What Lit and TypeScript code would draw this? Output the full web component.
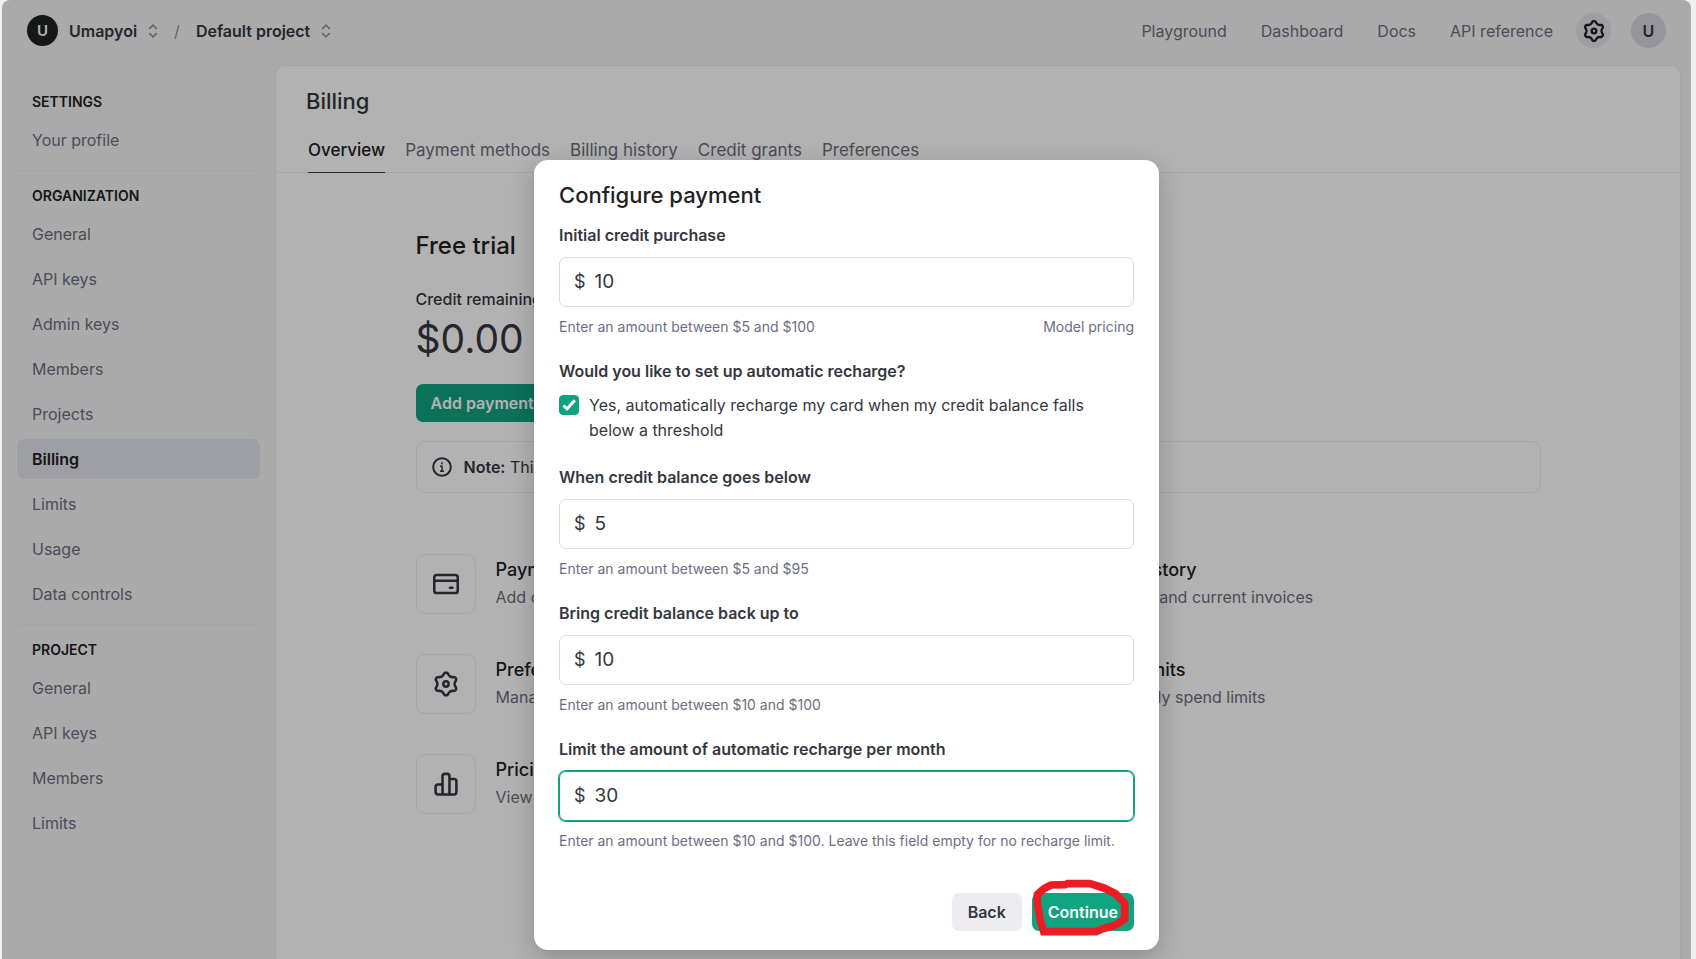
import { LitElement, html, css, svg, nothing } from "lit";
import { customElement, property } from "lit/decorators.js";
import { classMap } from "lit/directives/class-map.js";

const gearShape = svg`
  <path d="M11.568 3.5a1 1 0 0 0-.863.494l-.811 1.381A3 3 0 0 1 7.33 6.856l-1.596.013a1 1 0 0 0-.858.501l-.439.761a1 1 0 0 0-.004.992l.792 1.4a3 3 0 0 1 0 2.954l-.792 1.4a1 1 0 0 0 .004.992l.439.76a1 1 0 0 0 .858.502l1.596.013a3 3 0 0 1 2.564 1.48l.811 1.382a1 1 0 0 0 .863.494h.87a1 1 0 0 0 .862-.494l.812-1.381a3 3 0 0 1 2.563-1.481l1.596-.013a1 1 0 0 0 .859-.501l.438-.761a1 1 0 0 0 .005-.992l-.793-1.4a3 3 0 0 1 0-2.954l.793-1.4a1 1 0 0 0-.005-.992l-.439-.76a1 1 0 0 0-.858-.502l-1.597-.013a3 3 0 0 1-2.563-1.48L13.3 3.994a1 1 0 0 0-.862-.494h-.87Z"/>
  <circle cx="12" cy="12" r="2"/>`;

const gear = html`<svg viewBox="0 0 24 24" aria-hidden="true">${gearShape}</svg>`;
const card = html`<svg viewBox="0 0 24 24" aria-hidden="true">
  <rect x="3.2" y="5.2" width="17.6" height="13.6" rx="1.8"/>
  <path d="M3.4 9.6h17.2"/><path d="M15 14.8h1.8"/>
</svg>`;
const bars = html`<svg viewBox="0 0 24 24" aria-hidden="true">
  <path d="M9.4 19.8V6.2a1.8 1.8 0 0 1 1.8-1.8h1.6a1.8 1.8 0 0 1 1.8 1.8v13.6M9.4 12.4H6a1.8 1.8 0 0 0-1.8 1.8V18A1.8 1.8 0 0 0 6 19.8h12a1.8 1.8 0 0 0 1.8-1.8V10A1.8 1.8 0 0 0 18 8.200h-3.400"/>
</svg>`;
const chevrons = html`<svg class="chevrons" viewBox="0 0 10 14" aria-hidden="true">
  <path d="M1.200 4.800 5 1.200l3.800 3.600M1.200 9.200 5 12.800l3.800-3.600"/>
</svg>`;

interface NavGroup { title: string; items: string[]; active?: string; }

const groups: NavGroup[] = [
  { title: "SETTINGS", items: ["Your profile"] },
  {
    title: "ORGANIZATION",
    items: ["General", "API keys", "Admin keys", "Members", "Projects", "Billing", "Limits", "Usage", "Data controls"],
    active: "Billing",
  },
  { title: "PROJECT", items: ["General", "API keys", "Members", "Limits"] },
];

const tabs = ["Overview", "Payment methods", "Billing history", "Credit grants", "Preferences"];

const tiles = [
  { icon: card, title: "Payment methods", text: "Add or change payment method" },
  { icon: bars, title: "Billing history", text: "View past and current invoices" },
  { icon: gear, title: "Preferences", text: "Manage billing information" },
  { icon: gear, title: "Usage limits", text: "Set monthly spend limits" },
  { icon: bars, title: "Pricing", text: "View pricing and FAQs" },
];

@customElement("money-field")
class MoneyField extends LitElement {
  @property() label = "";
  @property() value = "";
  @property() hint = "";
  @property() linkText = "";
  @property({ type: Boolean }) active = false;

  static styles = css`
    :host { display: block; }
    .label { display: block; font-size: 16px; line-height: 24px; font-weight: 600; color: #353740; }
    .box {
      display: flex; align-items: center; gap: 9px; height: 50px; box-sizing: border-box;
      margin: 10px 0; padding: 0 14px; border: 1px solid #d9d9e3; border-radius: 7px; color: #353740;
    }
    .box.active { border-color: #10a37f; box-shadow: 0 0 0 1px #10a37f; }
    .sign { font-size: 18px; line-height: 24px; }
    .input {
      flex: 1; min-width: 0; border: 0; outline: 0; padding: 0; background: none;
      font: inherit; font-size: 19px; line-height: 24px; color: inherit;
    }
    .foot { display: flex; justify-content: space-between; font-size: 14px; line-height: 20px; color: #6e6e80; }
    .link { color: inherit; text-decoration: none; }
  `;

  render() {
    return html`
      <label class="label" for="amount">${this.label}</label>
      <div class=${classMap({ box: true, active: this.active })}>
        <span class="sign">$</span>
        <input class="input" id="amount" type="text" inputmode="numeric" .value=${this.value} aria-describedby="hint" />
      </div>
      <div class="foot">
        <span id="hint">${this.hint}</span>
        ${this.linkText ? html`<a class="link" href="#pricing">${this.linkText}</a>` : nothing}
      </div>
    `;
  }
}

@customElement("payment-dialog")
class PaymentDialog extends LitElement {
  static styles = css`
    :host { display: block; width: 100%; max-width: 625px; }
    .dialog {
      box-sizing: border-box; padding: 20px 25px 19px; border-radius: 14px; background: #fff; color: #353740;
      box-shadow: 0 8px 24px rgba(0, 0, 0, 0.22);
    }
    .title { margin: 0 0 10px; font-size: 22px; line-height: 30px; font-weight: 500; color: #202123; }
    .form { display: flex; flex-direction: column; gap: 22px; margin-top: 13px; }
    .recharge { margin: 0; padding: 0; border: 0; min-width: 0; }
    .legend { padding: 0; margin-bottom: 10px; font-size: 16px; line-height: 24px; font-weight: 600; }
    .check { display: grid; grid-template-columns: 20px 1fr; column-gap: 10px; padding-right: 30px; font-size: 16px; line-height: 25px; }
    .tick {
      grid-area: 1 / 1; appearance: none; width: 20px; height: 20px; margin: 2px 0 0; border-radius: 4px;
      border: 1px solid #d9d9e3;
    }
    .tick:checked { background: #10a37f; border-color: #10a37f; }
    .mark { grid-area: 1 / 1; width: 20px; height: 20px; margin-top: 2px; pointer-events: none; z-index: 1; fill: none; stroke: #fff; stroke-width: 3; }
    .actions { display: flex; justify-content: flex-end; gap: 10px; margin-top: 42px; }
    .button {
      height: 38px; padding: 0 16px; border: 0; border-radius: 7px; background: #ececf1; color: #353740;
      font: inherit; font-size: 16px; line-height: 24px; font-weight: 600;
    }
    .primary { background: #10a37f; color: #fff; }
    .marked { position: relative; display: flex; }
    .scribble { position: absolute; right: 0; top: -15px; width: 103px; height: 60px; pointer-events: none; overflow: visible; }
  `;

  render() {
    return html`
      <div class="dialog" role="dialog" aria-modal="true" aria-labelledby="title">
        <h2 class="title" id="title">Configure payment</h2>
        <div class="form">
          <money-field label="Initial credit purchase" value="10" hint="Enter an amount between $5 and $100" linkText="Model pricing"></money-field>
          <fieldset class="recharge">
            <legend class="legend">Would you like to set up automatic recharge?</legend>
            <div class="check">
              <input class="tick" id="auto" type="checkbox" checked />
              <svg class="mark" viewBox="0 0 20 20" aria-hidden="true"><path d="M4.500 10.500 8 13.800 15.800 5.200"/></svg>
              <label for="auto">Yes, automatically recharge my card when my credit balance falls below a threshold</label>
            </div>
          </fieldset>
          <money-field label="When credit balance goes below" value="5" hint="Enter an amount between $5 and $95"></money-field>
          <money-field label="Bring credit balance back up to" value="10" hint="Enter an amount between $10 and $100"></money-field>
          <money-field active label="Limit the amount of automatic recharge per month" value="30" hint="Enter an amount between $10 and $100. Leave this field empty for no recharge limit."></money-field>
        </div>
        <div class="actions">
          <button class="button">Back</button>
          <div class="marked">
            <button class="button primary">Continue</button>
            <svg class="scribble" viewBox="153 54 309 180" aria-hidden="true">
              <path fill="none" stroke="#ed1c24" stroke-width="23" stroke-linejoin="round"
                d="M194 224 181 182 172 130V104L192 86 213 75 255 74 262 71H330L372 84 408 102 434 130V178L405 196 365 207 348 215H186"/>
            </svg>
          </div>
        </div>
      </div>
    `;
  }
}

@customElement("app-root")
class AppRoot extends LitElement {
  static styles = css`
    :host {
      display: block; box-sizing: border-box; height: 100vh; padding: 0 5px 0 2px; background: #f1f1f1;
      font-family: Inter, "Liberation Sans", sans-serif; color: #353740; font-size: 16px; line-height: 24px;
    }
    a { color: inherit; text-decoration: none; }
    .frame {
      position: relative; height: 100%; overflow: hidden; border-radius: 8px 8px 0 0; background: #f4f4f4;
      display: grid; grid-template: 65px 1fr / 273px 1fr;
    }
    .top { grid-column: 1 / -1; display: flex; align-items: center; justify-content: space-between; padding: 0 25px 4px; }
    .crumbs, .links { display: flex; align-items: center; }
    .crumbs { gap: 11px; }
    .logo, .round { display: flex; align-items: center; justify-content: center; border-radius: 50%; font-weight: 600; }
    .logo { width: 31px; height: 31px; background: #202123; color: #fff; font-size: 15px; }
    .switch {
      display: flex; align-items: center; gap: 11px; padding: 0; border: 0; background: none;
      font: inherit; font-weight: 600; color: #353740;
    }
    .chevrons { width: 10px; height: 14px; fill: none; stroke: #8e8ea0; stroke-width: 1.6; }
    .slash { padding: 0 5px; color: #8e8ea0; }
    .links { gap: 34px; color: #6e6e80; }
    .tools { display: flex; gap: 20px; margin-left: -11px; }
    .round { width: 35px; height: 35px; padding: 0; border: 0; background: #e3e3ec; color: #353740; font: inherit; font-weight: 600; }
    .round svg { width: 28px; height: 28px; fill: none; stroke: #202123; stroke-width: 2; }
    .user { background: #d5d7e0; }
    .side { padding: 25px 15px 0; }
    .group + .group { margin-top: 10px; padding-top: 13px; border-top: 1px solid #ececf1; }
    .caption { margin: 0 0 6px; padding: 0 15px; font-size: 14px; line-height: 24px; font-weight: 600; color: #202123; }
    .list { display: flex; flex-direction: column; gap: 5px; }
    .item { padding: 8px 15px; border-radius: 7px; color: #6e6e80; }
    .item.on { background: #e3e3ec; color: #202123; font-weight: 600; }
    .panel { margin-right: 10px; border: 1px solid #ececf1; border-bottom: 0; border-radius: 10px 10px 0 0; background: #fff; }
    .heading { margin: 0; padding: 20px 30px 0; font-size: 22px; line-height: 30px; font-weight: 500; }
    .tabs { display: flex; gap: 20px; padding: 22px 32px 0; border-bottom: 1px solid #ececf1; font-size: 17px; }
    .tab { padding-bottom: 10px; margin-bottom: -1px; border-bottom: 1px solid transparent; color: #6e6e80; }
    .tab.on { border-color: #353740; color: #202123; font-weight: 500; }
    .content { max-width: 1125px; margin: 0 auto; padding-top: 57px; }
    .plan { margin: 0 0 25px; font-size: 24px; line-height: 32px; font-weight: 500; color: #202123; }
    .label { font-weight: 500; }
    .amount { margin: 3px 0 20px; font-size: 39px; line-height: 50px; }
    .add { height: 38px; padding: 0 15px; border: 0; border-radius: 7px; background: #10a37f; color: #fff; font: inherit; font-weight: 600; }
    .note { display: flex; align-items: center; gap: 12px; margin-top: 19px; padding: 13px 15px; border: 1px solid #ececf1; border-radius: 9px; }
    .note svg { width: 20px; height: 20px; fill: none; stroke: #353740; stroke-width: 2; }
    .note b { font-weight: 600; }
    .tiles { display: grid; grid-template-columns: 1fr 1fr; gap: 40px 45px; margin-top: 61px; }
    .tile { display: flex; gap: 20px; }
    .icon { display: flex; align-items: center; justify-content: center; width: 58px; height: 58px; border: 1px solid #ececf1; border-radius: 9px; }
    .icon svg { width: 32px; height: 32px; fill: none; stroke: #353740; stroke-width: 1.9; stroke-linecap: round; stroke-linejoin: round; }
    .name { font-size: 18px; line-height: 28px; color: #202123; font-weight: 500; padding-top: 2px; }
    .text { color: #6e6e80; line-height: 26px; }
    .overlay {
      position: absolute; inset: 0; display: flex; justify-content: center; align-items: flex-start;
      padding-top: 160px; background: rgba(0, 0, 0, 0.3);
    }
  `;

  render() {
    return html`
      <div class="frame">
        <header class="top">
          <div class="crumbs">
            <span class="logo">U</span>
            <button class="switch">Umapyoi ${chevrons}</button>
            <span class="slash">/</span>
            <button class="switch">Default project ${chevrons}</button>
          </div>
          <nav class="links">
            <a href="#playground">Playground</a>
            <a href="#dashboard">Dashboard</a>
            <a href="#docs">Docs</a>
            <a href="#api">API reference</a>
            <div class="tools">
              <button class="round" aria-label="Settings">${gear}</button>
              <button class="round user" aria-label="Account">U</button>
            </div>
          </nav>
        </header>
        <nav class="side">
          ${groups.map((g) => html`
            <section class="group">
              <h2 class="caption">${g.title}</h2>
              <div class="list">
                ${g.items.map((i) => html`<a href="#nav" class=${classMap({ item: true, on: i === g.active })}>${i}</a>`)}
              </div>
            </section>`)}
        </nav>
        <main class="panel">
          <h1 class="heading">Billing</h1>
          <nav class="tabs">
            ${tabs.map((t, i) => html`<a href="#tab" class=${classMap({ tab: true, on: i === 0 })}>${t}</a>`)}
          </nav>
          <div class="content">
            <h2 class="plan">Free trial</h2>
            <div class="label">Credit remaining</div>
            <div class="amount">$0.00</div>
            <button class="add">Add payment details</button>
            <div class="note">
              <svg viewBox="0 0 20 20" aria-hidden="true"><circle cx="10" cy="10" r="8.800"/><path d="M8 9.200h2v5M8 14.200h4M10 5.200v2"  stroke-width="1.500"/></svg>
              <span><b>Note:</b> This does not reflect the status of your ChatGPT account.</span>
            </div>
            <div class="tiles">
              ${tiles.map((t) => html`
                <div class="tile">
                  <div class="icon">${t.icon}</div>
                  <div><div class="name">${t.title}</div><div class="text">${t.text}</div></div>
                </div>`)}
            </div>
          </div>
        </main>
        <div class="overlay"><payment-dialog></payment-dialog></div>
      </div>
    `;
  }
}
